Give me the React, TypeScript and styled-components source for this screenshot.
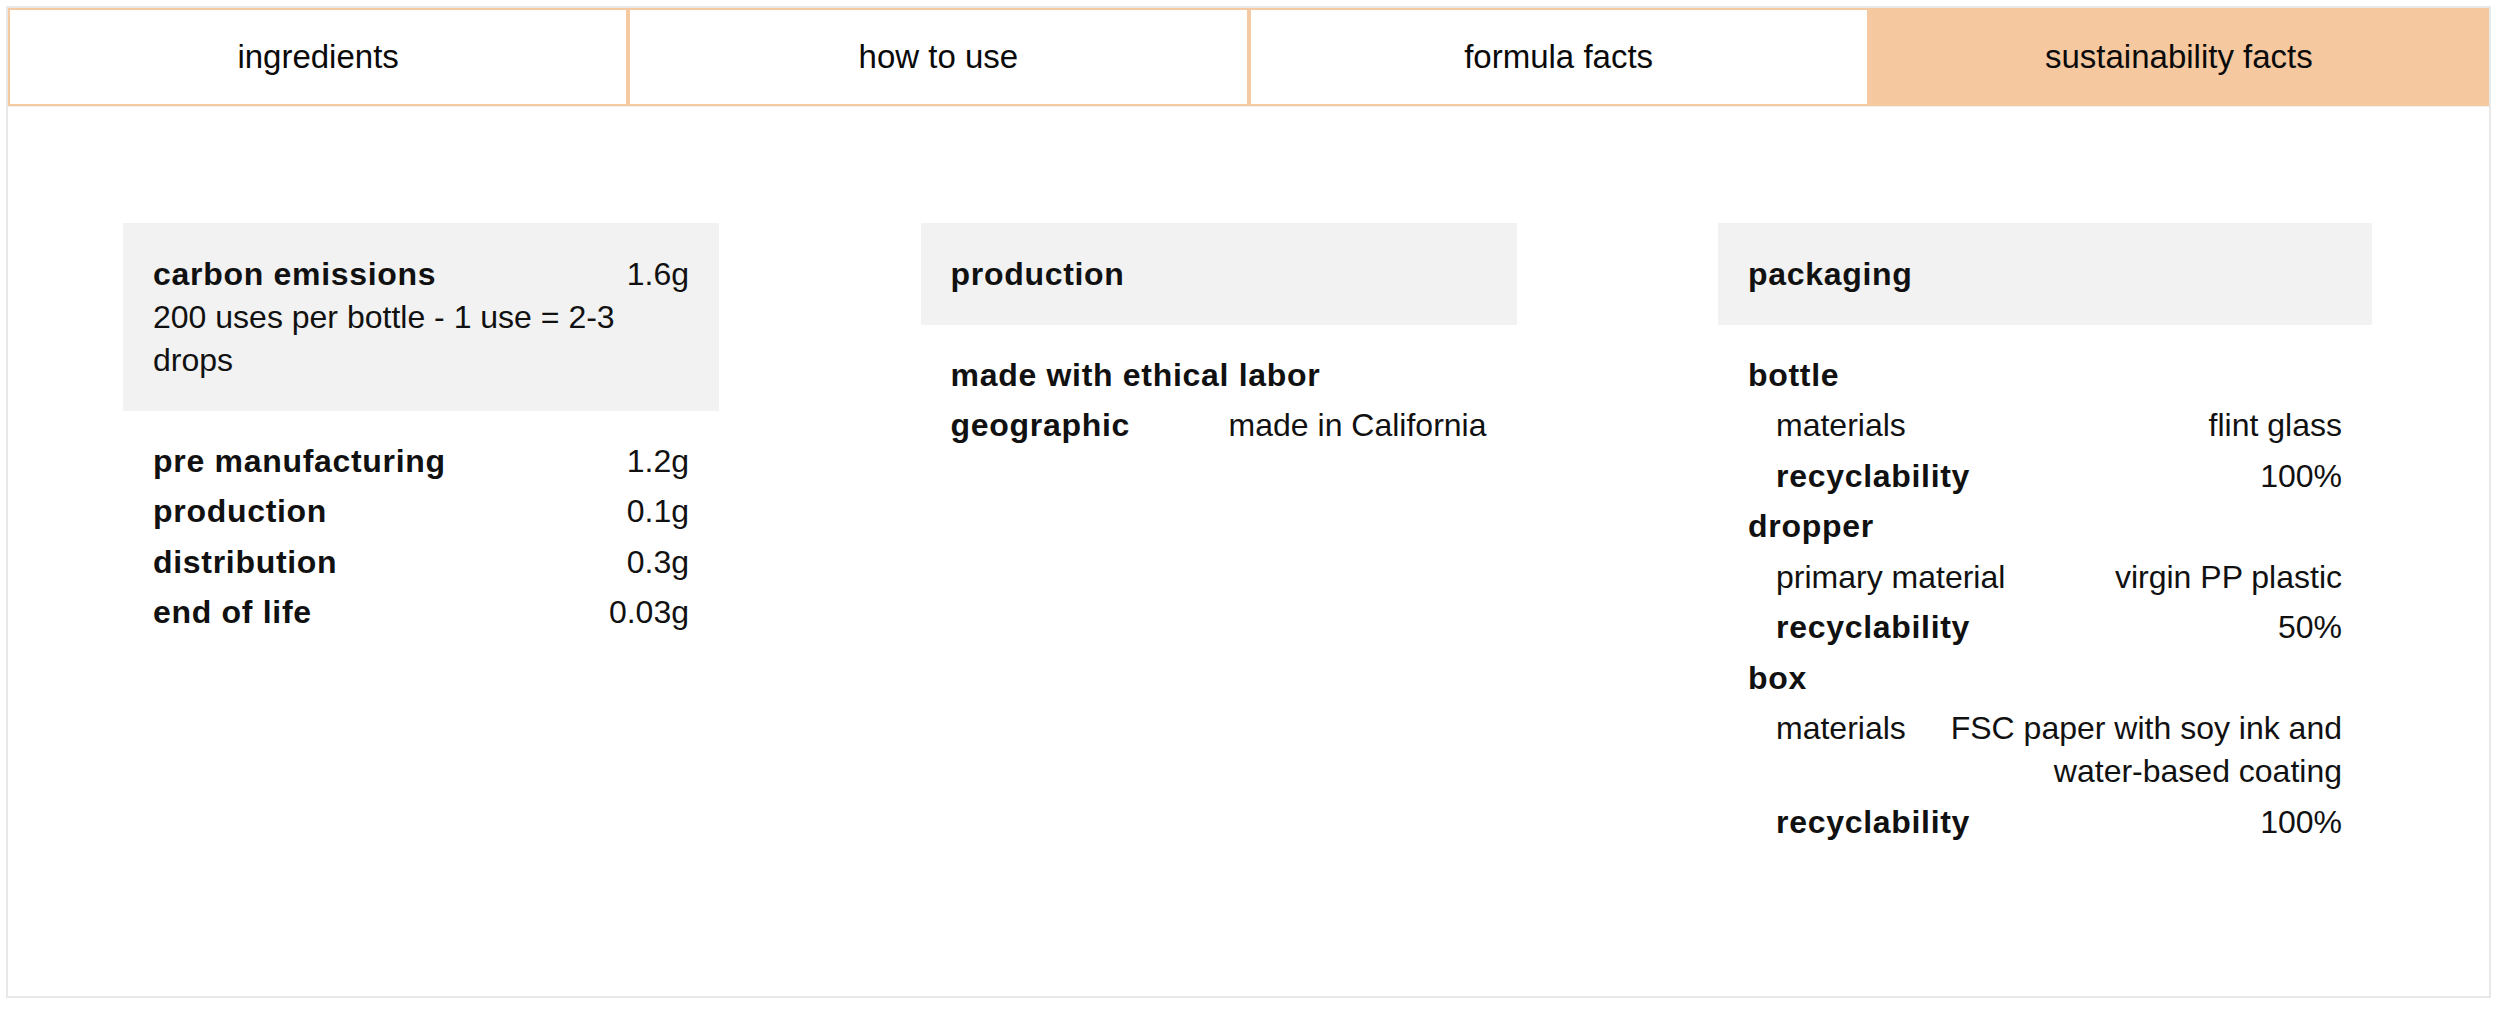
import React from 'react';
import styled, { createGlobalStyle } from 'styled-components';

const GlobalStyle = createGlobalStyle`
  html, body {
    margin: 0;
    padding: 0;
    background: #ffffff;
  }
  body {
    font-family: "Liberation Sans", Arial, sans-serif;
    color: #111111;
  }
`;

const Panel = styled.div`
  box-sizing: border-box;
  margin: 6px 0 0 6px;
  width: 2485px;
  height: 992px;
  border: 2px solid #e8e8e8;
  background: #ffffff;
`;

const TabBar = styled.div`
  display: grid;
  grid-template-columns: repeat(4, 1fr);
  border-bottom: 1px solid #eceef0;
`;

const Tab = styled.button<{ $active?: boolean }>`
  box-sizing: border-box;
  height: 98px;
  padding: 0;
  border: 2px solid #f5c9a1;
  background: ${p => (p.$active ? '#f5c8a0' : '#ffffff')};
  color: #0a0a0a;
  font-family: "Liberation Sans", Arial, sans-serif;
  font-size: 33px;
  font-weight: 400;
  display: flex;
  align-items: center;
  justify-content: center;
  cursor: pointer;
`;

const Columns = styled.div`
  display: grid;
  grid-template-columns: 596px 596px 654px;
  justify-content: space-between;
  align-items: start;
  padding: 116px 117px 0 115px;
`;

const Section = styled.section`
  display: flex;
  flex-direction: column;
`;

const Head = styled.div`
  background: #f2f2f2;
  padding: 29.5px 30px;
`;

const Rows = styled.div`
  display: flex;
  flex-direction: column;
  gap: 7.5px;
  padding: 28.5px 30px 0;
`;

const Row = styled.div<{ $indent?: boolean }>`
  display: flex;
  justify-content: space-between;
  gap: 24px;
  padding-left: ${p => (p.$indent ? '28px' : '0')};
  font-size: 32px;
  line-height: 43px;
`;

const Label = styled.span<{ $bold?: boolean }>`
  flex: none;
  font-weight: ${p => (p.$bold ? 700 : 400)};
  letter-spacing: ${p => (p.$bold ? '0.7px' : '0')};
`;

const Value = styled.span`
  text-align: right;
`;

const Note = styled.div`
  font-size: 32px;
  line-height: 43px;
`;

type Line = { label: string; value?: string; bold?: boolean; indent?: boolean };

const tabs = ['ingredients', 'how to use', 'formula facts', 'sustainability facts'];

const carbon: Line[] = [
  { label: 'pre manufacturing', value: '1.2g', bold: true },
  { label: 'production', value: '0.1g', bold: true },
  { label: 'distribution', value: '0.3g', bold: true },
  { label: 'end of life', value: '0.03g', bold: true },
];

const production: Line[] = [
  { label: 'made with ethical labor', bold: true },
  { label: 'geographic', value: 'made in California', bold: true },
];

const packaging: Line[] = [
  { label: 'bottle', bold: true },
  { label: 'materials', value: 'flint glass', indent: true },
  { label: 'recyclability', value: '100%', bold: true, indent: true },
  { label: 'dropper', bold: true },
  { label: 'primary material', value: 'virgin PP plastic', indent: true },
  { label: 'recyclability', value: '50%', bold: true, indent: true },
  { label: 'box', bold: true },
  { label: 'materials', value: 'FSC paper with soy ink and water-based coating', indent: true },
  { label: 'recyclability', value: '100%', bold: true, indent: true },
];

const LineList = ({ lines }: { lines: Line[] }) => (
  <Rows>
    {lines.map((l, i) => (
      <Row key={i} $indent={l.indent}>
        <Label $bold={l.bold}>{l.label}</Label>
        {l.value && <Value>{l.value}</Value>}
      </Row>
    ))}
  </Rows>
);

export default function App() {
  return (
    <>
      <GlobalStyle />
      <Panel>
        <TabBar>
          {tabs.map(t => (
            <Tab key={t} $active={t === 'sustainability facts'}>
              {t}
            </Tab>
          ))}
        </TabBar>
        <Columns>
          <Section>
            <Head>
              <Row>
                <Label $bold>carbon emissions</Label>
                <Value>1.6g</Value>
              </Row>
              <Note>200 uses per bottle - 1 use = 2-3 drops</Note>
            </Head>
            <LineList lines={carbon} />
          </Section>
          <Section>
            <Head>
              <Row>
                <Label $bold>production</Label>
              </Row>
            </Head>
            <LineList lines={production} />
          </Section>
          <Section>
            <Head>
              <Row>
                <Label $bold>packaging</Label>
              </Row>
            </Head>
            <LineList lines={packaging} />
          </Section>
        </Columns>
      </Panel>
    </>
  );
}
